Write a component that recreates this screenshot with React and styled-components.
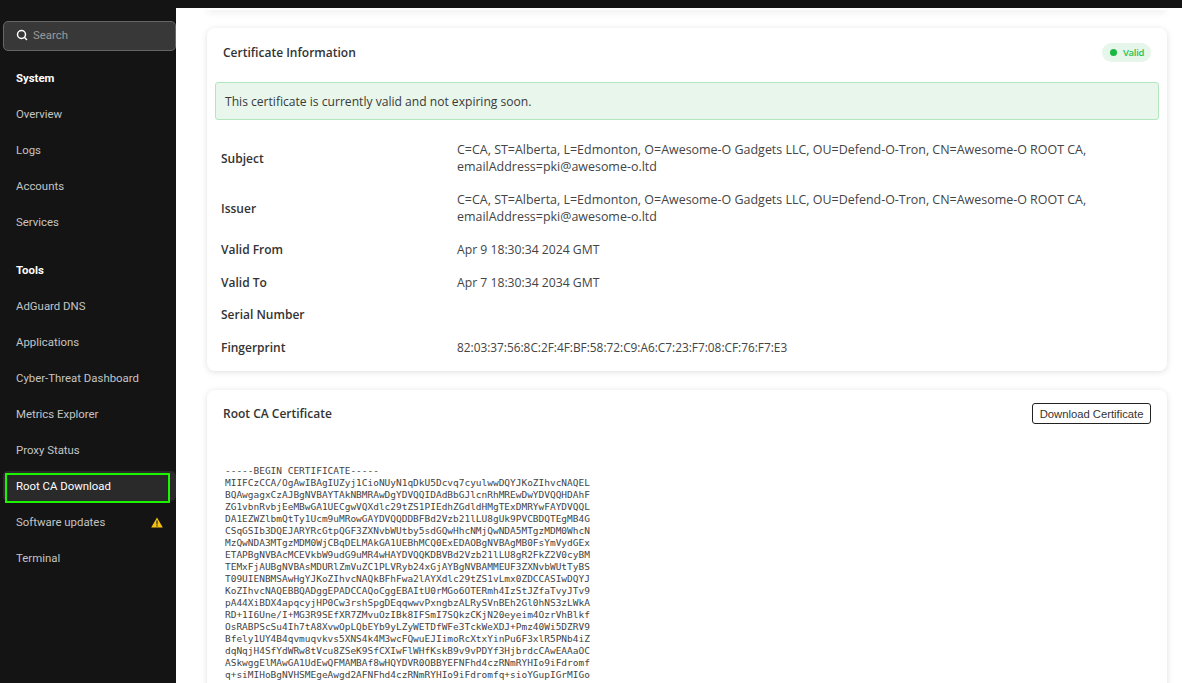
import React from "react";
import styled, { createGlobalStyle } from "styled-components";
import { Search } from "lucide-react";

const systemLinks = ["Overview", "Logs", "Accounts", "Services"];

const certificateLines = [
  "-----BEGIN CERTIFICATE-----",
  "MIIFCzCCA/OgAwIBAgIUZyj1CioNUyN1qDkU5Dcvq7cyulwwDQYJKoZIhvcNAQEL",
  "BQAwgagxCzAJBgNVBAYTAkNBMRAwDgYDVQQIDAdBbGJlcnRhMREwDwYDVQQHDAhF",
  "ZG1vbnRvbjEeMBwGA1UECgwVQXdlc29tZS1PIEdhZGdldHMgTExDMRYwFAYDVQQL",
  "DA1EZWZlbmQtTy1Ucm9uMRowGAYDVQQDDBFBd2Vzb21lLU8gUk9PVCBDQTEgMB4G",
  "CSqGSIb3DQEJARYRcGtpQGF3ZXNvbWUtby5sdGQwHhcNMjQwNDA5MTgzMDM0WhcN",
  "MzQwNDA3MTgzMDM0WjCBqDELMAkGA1UEBhMCQ0ExEDAOBgNVBAgMB0FsYmVydGEx",
  "ETAPBgNVBAcMCEVkbW9udG9uMR4wHAYDVQQKDBVBd2Vzb21lLU8gR2FkZ2V0cyBM",
  "TEMxFjAUBgNVBAsMDURlZmVuZC1PLVRyb24xGjAYBgNVBAMMEUF3ZXNvbWUtTyBS",
  "T09UIENBMSAwHgYJKoZIhvcNAQkBFhFwa2lAYXdlc29tZS1vLmx0ZDCCASIwDQYJ",
  "KoZIhvcNAQEBBQADggEPADCCAQoCggEBAItU0rMGo6OTERmh4IzStJZfaTvyJTv9",
  "pA44XiBDX4apqcyjHP0Cw3rshSpgDEqqwwvPxngbzALRySVnBEh2Gl0hNS3zLWkA",
  "RD+1I6Une/I+MG3R9SEfXR7ZMvuOzIBk8IFSmI7SQkzCKjN20eyeim4OzrVhBlkf",
  "OsRABPScSu4Ih7tA8XvwOpLQbEYb9yLZyWETDfWFe3TckWeXDJ+Pmz40Wi5DZRV9",
  "Bfely1UY4B4qvmuqvkvs5XNS4k4M3wcFQwuEJIimoRcXtxYinPu6F3xlR5PNb4iZ",
  "dqNqjH4SfYdWRw8tVcu8ZSeK9SfCXIwFlWHfKskB9v9vPDYf3HjbrdcCAwEAAaOC",
  "ASkwggElMAwGA1UdEwQFMAMBAf8wHQYDVR0OBBYEFNFhd4czRNmRYHIo9iFdromf",
  "q+siMIHoBgNVHSMEgeAwgd2AFNFhd4czRNmRYHIo9iFdromfq+sioYGupIGrMIGo",
];

const subjectText =
  "C=CA, ST=Alberta, L=Edmonton, O=Awesome-O Gadgets LLC, OU=Defend-O-Tron, CN=Awesome-O ROOT CA, emailAddress=pki@awesome-o.ltd";

const certificateRows = [
  { label: "Subject", value: subjectText, tall: true, size: 12.46 },
  { label: "Issuer", value: subjectText, tall: true, size: 12.46 },
  { label: "Valid From", value: "Apr 9 18:30:34 2024 GMT", size: 12.2 },
  { label: "Valid To", value: "Apr 7 18:30:34 2034 GMT", size: 12.2 },
  { label: "Serial Number", value: "", size: 12.2 },
  {
    label: "Fingerprint",
    value: "82:03:37:56:8C:2F:4F:BF:58:72:C9:A6:C7:23:F7:08:CF:76:F7:E3",
    size: 11.85,
  },
];

const GlobalStyle = createGlobalStyle`
  html, body {
    margin: 0;
    height: 100%;
    overflow: hidden;
    background: #141414;
  }
`;

const Shell = styled.div`
  display: flex;
  width: 1182px;
  height: 683px;
  overflow: hidden;
  background: #141414;
`;

const Sidebar = styled.nav`
  flex: 0 0 176px;
  box-sizing: border-box;
  padding-top: 21px;
  display: flex;
  flex-direction: column;
  font-family: Roboto, "Open Sans", sans-serif;
`;

const SearchBox = styled.div`
  box-sizing: border-box;
  height: 30px;
  margin: 0 0 0 3px;
  padding: 0 0 2px 12px;
  display: flex;
  align-items: center;
  gap: 5px;
  background: #383838;
  border: 1px solid #666666;
  border-radius: 5px;
  color: #9a9a9a;
  font-size: 11.4px;
`;

const SectionTitle = styled.div`
  height: 36px;
  margin-top: ${(p) => p.$top}px;
  padding-left: 16px;
  display: flex;
  align-items: center;
  color: #ffffff;
  font-size: 11.4px;
  font-weight: 700;
`;

const NavItem = styled.a`
  position: relative;
  box-sizing: border-box;
  height: 30px;
  margin: 3px 0 3px 3px;
  padding: 0 13px;
  display: flex;
  align-items: center;
  justify-content: space-between;
  border-radius: 5px;
  font-size: 11.4px;
  color: ${(p) => (p.$active ? "#ffffff" : "#c4c4c4")};
  background: ${(p) => (p.$active ? "#2a2a2a" : "transparent")};
`;

const Annotation = styled.span`
  position: absolute;
  top: 2px;
  left: 2px;
  width: 165px;
  height: 30px;
  box-sizing: border-box;
  border: 2px solid #1cf500;
`;

const Main = styled.main`
  flex: 1;
  margin-top: 8px;
  min-width: 0;
  overflow: hidden;
  background: #ffffff;
  padding: 0 15px 0 31px;
  font-family: "Open Sans", sans-serif;
  color: #333333;
`;

const CardEdge = styled.div`
  height: 2px;
  margin-bottom: 18px;
  border-radius: 0 0 8px 8px;
  background: #ffffff;
  box-shadow: 0 2px 6px rgba(0, 0, 0, 0.16);
`;

const Card = styled.section`
  background: #ffffff;
  border-radius: 8px;
  box-shadow: 0 1px 6px rgba(0, 0, 0, 0.13);
  margin-bottom: 19px;
  padding-bottom: ${(p) => p.$bottom || 0}px;
`;

const CardHeader = styled.header`
  box-sizing: border-box;
  height: 54px;
  padding: 0 16px 6px;
  display: flex;
  align-items: center;
  justify-content: space-between;
`;

const CardTitle = styled.h2`
  margin: 0;
  font-size: 12px;
  font-weight: 600;
  color: #333333;
`;

const StatusPill = styled.span`
  box-sizing: border-box;
  height: 19px;
  width: 49px;
  padding-left: 8px;
  display: flex;
  align-items: center;
  gap: 6px;
  border-radius: 10px;
  background: #e6f6ea;
  color: #27c24c;
  font-size: 9.5px;
  font-weight: 600;
  letter-spacing: -0.3px;
`;

const StatusDot = styled.i`
  width: 7px;
  height: 7px;
  border-radius: 50%;
  background: #19b83f;
`;

const Notice = styled.div`
  box-sizing: border-box;
  height: 38px;
  margin: 0 8px;
  padding: 0 9px;
  display: flex;
  align-items: center;
  background: #e8f6ec;
  border: 1px solid #b2e6bf;
  border-radius: 3px;
  font-size: 12.1px;
  color: #3a3a3a;
`;

const InfoGrid = styled.dl`
  margin: 13px 0 0;
  padding: 0 14px 7.2px;
  display: grid;
  grid-template-columns: 236px 1fr;
`;

const InfoLabel = styled.dt`
  height: ${(p) => (p.$tall ? 50 : 32.7)}px;
  display: flex;
  align-items: center;
  font-size: 12px;
  font-weight: 600;
  color: #333333;
`;

const InfoValue = styled.dd`
  margin: 0;
  height: ${(p) => (p.$tall ? 50 : 32.7)}px;
  display: flex;
  align-items: center;
  font-size: ${(p) => p.$size}px;
  line-height: 17px;
  color: #444444;
`;

const DownloadButton = styled.button`
  box-sizing: border-box;
  height: 21px;
  padding: 0 6.5px;
  background: #ffffff;
  border: 1px solid #222222;
  border-radius: 3px;
  font-family: "Liberation Sans", Arial, sans-serif;
  font-size: 11.25px;
  color: #333333;
`;

const CertificateText = styled.pre`
  margin: 0;
  padding: 21px 18px 0;
  font-family: "DejaVu Sans Mono", monospace;
  font-size: 9.47px;
  line-height: 12px;
  color: #444444;
`;

function WarningIcon() {
  return (
    <svg width="12" height="11" viewBox="0 0 12 11">
      <path d="M6 0.4 11.8 10.6H0.2Z" fill="#f5c211" />
      <path d="M5.4 3.6h1.2v3.8H5.4zM5.4 8.2h1.2v1.2H5.4z" fill="#222222" />
    </svg>
  );
}

export default function App() {
  return (
    <Shell>
      <GlobalStyle />
      <Sidebar>
        <SearchBox>
          <Search size={12} color="#ffffff" strokeWidth={3} />
          Search
        </SearchBox>
        <SectionTitle $top={9}>System</SectionTitle>
        {systemLinks.map((link) => (
          <NavItem key={link}>{link}</NavItem>
        ))}
        <SectionTitle $top={12}>Tools</SectionTitle>
        <NavItem>AdGuard DNS</NavItem>
        <NavItem>Applications</NavItem>
        <NavItem>Cyber-Threat Dashboard</NavItem>
        <NavItem>Metrics Explorer</NavItem>
        <NavItem>Proxy Status</NavItem>
        <NavItem $active>
          Root CA Download
          <Annotation />
        </NavItem>
        <NavItem>
          Software updates
          <WarningIcon />
        </NavItem>
        <NavItem>Terminal</NavItem>
      </Sidebar>
      <Main>
        <CardEdge />
        <Card>
          <CardHeader>
            <CardTitle>Certificate Information</CardTitle>
            <StatusPill>
              <StatusDot />
              Valid
            </StatusPill>
          </CardHeader>
          <Notice>This certificate is currently valid and not expiring soon.</Notice>
          <InfoGrid>
            {certificateRows.map((row) => (
              <React.Fragment key={row.label}>
                <InfoLabel $tall={row.tall}>{row.label}</InfoLabel>
                <InfoValue $tall={row.tall} $size={row.size}>
                  <span>{row.value}</span>
                </InfoValue>
              </React.Fragment>
            ))}
          </InfoGrid>
        </Card>
        <Card $bottom={20}>
          <CardHeader>
            <CardTitle>Root CA Certificate</CardTitle>
            <DownloadButton>Download Certificate</DownloadButton>
          </CardHeader>
          <CertificateText>{certificateLines.join("\n")}</CertificateText>
        </Card>
      </Main>
    </Shell>
  );
}
